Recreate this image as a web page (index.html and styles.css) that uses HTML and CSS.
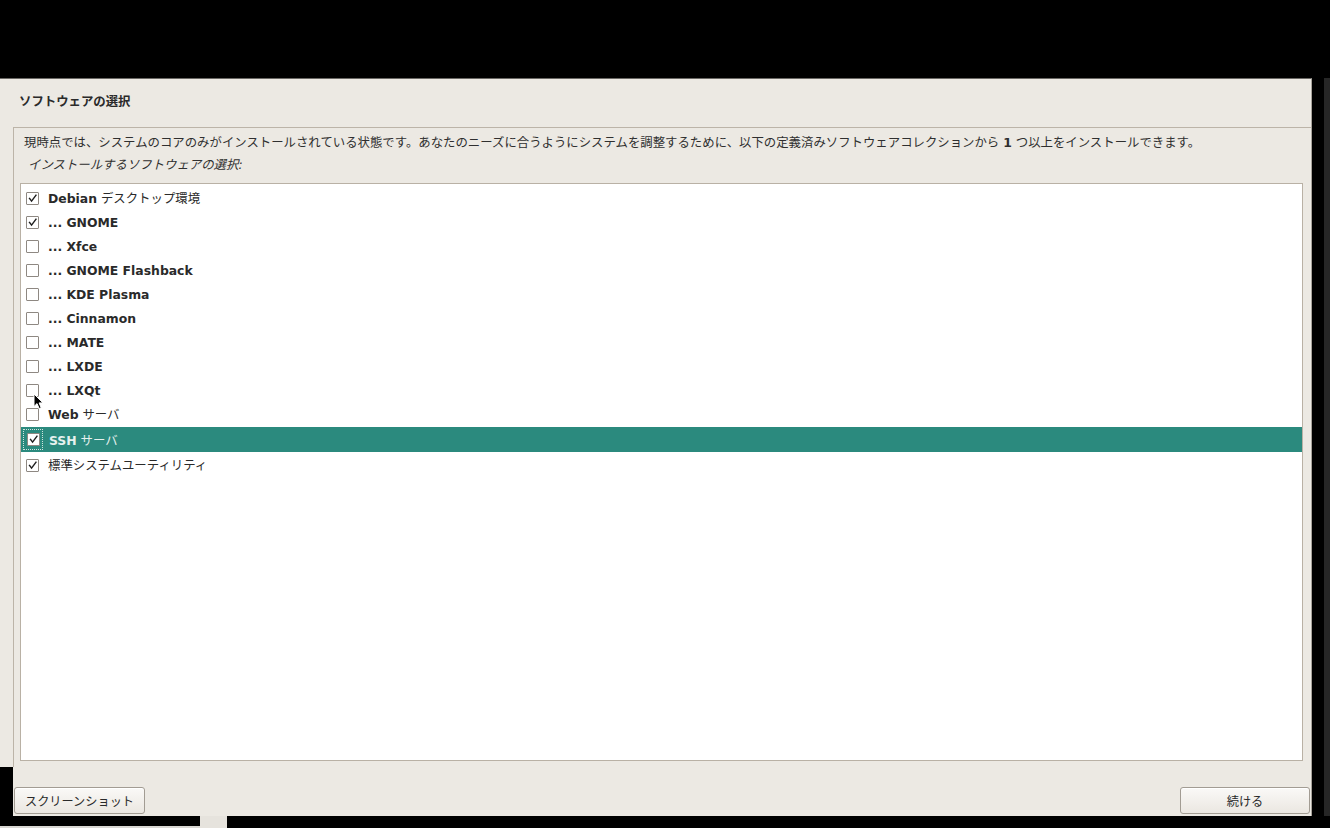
FILE: index.html
```html
<!DOCTYPE html>
<html lang="ja">
<head>
<meta charset="utf-8">
<title>ソフトウェアの選択</title>
<link rel="stylesheet" href="styles.css">
</head>
<body>
<div class="screen">
  <div class="top-black"></div>
  <div class="middle">
    <div class="window">
      <div class="header"><h1 class="title">ソフトウェアの選択</h1></div>
      <div class="frame">
        <p class="desc">現時点では、システムのコアのみがインストールされている状態です。あなたのニーズに合うようにシステムを調整するために、以下の定義済みソフトウェアコレクションから <b>1</b> つ以上をインストールできます。</p>
        <p class="prompt">インストールするソフトウェアの選択:</p>
        <ul class="list">
          <li class="row"><span class="focus"><span class="cb checked"><svg viewBox="0 0 13 13"><path d="M3 6.5 L5.4 9.6 L10.6 2.6"/></svg></span></span><span class="label"><b>Debian</b> デスクトップ環境</span></li>
          <li class="row"><span class="focus"><span class="cb checked"><svg viewBox="0 0 13 13"><path d="M3 6.5 L5.4 9.6 L10.6 2.6"/></svg></span></span><span class="label"><b>... GNOME</b></span></li>
          <li class="row"><span class="focus"><span class="cb"></span></span><span class="label"><b>... Xfce</b></span></li>
          <li class="row"><span class="focus"><span class="cb"></span></span><span class="label"><b>... GNOME Flashback</b></span></li>
          <li class="row"><span class="focus"><span class="cb"></span></span><span class="label"><b>... KDE Plasma</b></span></li>
          <li class="row"><span class="focus"><span class="cb"></span></span><span class="label"><b>... Cinnamon</b></span></li>
          <li class="row"><span class="focus"><span class="cb"></span></span><span class="label"><b>... MATE</b></span></li>
          <li class="row"><span class="focus"><span class="cb"></span></span><span class="label"><b>... LXDE</b></span></li>
          <li class="row"><span class="focus"><span class="cb"></span></span><span class="label"><b>... LXQt</b></span><svg class="cursor" viewBox="0 0 11 17"><path d="M1 1 L1 13.5 L4 10.6 L6.2 15.6 L8.2 14.7 L6.1 9.9 L10 9.9 Z"/></svg></li>
          <li class="row"><span class="focus"><span class="cb"></span></span><span class="label"><b>Web</b> サーバ</span></li>
          <li class="row selected"><span class="focus"><span class="cb checked"><svg viewBox="0 0 13 13"><path d="M3 6.5 L5.4 9.6 L10.6 2.6"/></svg></span></span><span class="label"><b>SSH</b> サーバ</span></li>
          <li class="row"><span class="focus"><span class="cb checked"><svg viewBox="0 0 13 13"><path d="M3 6.5 L5.4 9.6 L10.6 2.6"/></svg></span></span><span class="label">標準システムユーティリティ</span></li>
        </ul>
      </div>
      <div class="footer">
        <div class="gutter"></div>
        <button class="btn btn-left">スクリーンショット</button>
        <div class="spacer"></div>
        <button class="btn btn-right">続ける</button>
      </div>
    </div>
    <div class="edge-black"></div>
    <div class="edge-gray"></div>
  </div>
  <div class="bottom">
    <div class="b1"></div>
    <div class="b2"></div>
    <div class="b3"></div>
  </div>
</div>
</body>
</html>
```

FILE: styles.css
```css
html, body {
  margin: 0;
  padding: 0;
  background: #000;
}
.screen {
  width: 1330px;
  height: 828px;
  display: flex;
  flex-direction: column;
  background: #000;
  overflow: hidden;
  font-family: "DejaVu Sans", "Noto Sans CJK JP", sans-serif;
  font-size: 12.4px;
  color: #2f2f2f;
}
.top-black {
  height: 78px;
  flex: none;
}
.middle {
  display: flex;
  height: 738px;
  flex: none;
}
.window {
  width: 1311px;
  flex: none;
  background: #ece9e3;
  border-top: 1px solid #6a6864;
  border-right: 1px solid #a8a39b;
  display: flex;
  flex-direction: column;
}
.edge-black {
  width: 12px;
  flex: none;
}
.edge-gray {
  flex: 1;
  background: #262626;
}
.header {
  height: 48px;
  flex: none;
  display: flex;
  align-items: center;
  padding-left: 19px;
  padding-bottom: 4px;
  box-sizing: border-box;
}
.title {
  margin: 0;
  font-size: 12.4px;
  font-weight: bold;
  color: #2a2a2a;
}
.frame {
  height: 640px;
  flex: none;
  margin-left: 13px;
  border-top: 1px solid #bcb4a8;
  border-left: 1px solid #bcb4a8;
  box-sizing: border-box;
  padding: 6px 8px 6px 6px;
  display: flex;
  flex-direction: column;
}
.desc {
  margin: 0 0 0 4px;
  line-height: 17px;
  white-space: nowrap;
}
.prompt {
  margin: 5px 0 0 8px;
  line-height: 17px;
  font-style: italic;
}
.list {
  list-style: none;
  margin: 10px 0 0 0;
  padding: 2px 0 0 0;
  flex: 1;
  background: #fff;
  border: 1px solid #b9b1a5;
}
.row {
  position: relative;
  height: 24px;
  display: flex;
  align-items: center;
  padding-left: 2px;
  color: #2a2a2a;
}
.row.selected {
  margin-top: 1px;
  height: 25px;
  background: #2b8a7e;
  color: #e6f1ee;
}
.row + .row.selected + .row {
  height: 26px;
}
.focus {
  width: 19px;
  height: 19px;
  box-sizing: border-box;
  border: 1px dotted transparent;
  display: flex;
  align-items: center;
  justify-content: center;
  margin-right: 6px;
}
.selected .focus {
  border-color: #cfe3de;
  height: 21px;
  width: 20px;
}
.cb {
  width: 13px;
  height: 13px;
  box-sizing: border-box;
  border: 1px solid #8e8882;
  border-radius: 1px;
  background: #fff;
  display: block;
}
.cb svg {
  width: 11px;
  height: 11px;
  display: block;
}
.cb svg path {
  fill: none;
  stroke: #1e1e1e;
  stroke-width: 1.7;
  stroke-linecap: square;
  stroke-linejoin: miter;
}
.label {
  white-space: nowrap;
}
.label b {
  font-weight: bold;
}
.cursor {
  position: absolute;
  left: 12px;
  top: 15px;
  width: 11px;
  height: 17px;
}
.cursor path {
  fill: #000;
  stroke: #fff;
  stroke-width: 1;
  stroke-linejoin: round;
}
.footer {
  flex: 1;
  display: flex;
  align-items: flex-end;
  padding-bottom: 2px;
  position: relative;
}
.gutter {
  position: absolute;
  left: 0;
  top: 0;
  bottom: 0;
  width: 13px;
  background: #000;
}
.btn {
  height: 27px;
  font-family: "DejaVu Sans", "Noto Sans CJK JP", sans-serif;
  font-size: 12.2px;
  color: #2a2a2a;
  border: 1px solid #a29c93;
  border-radius: 3px;
  background: linear-gradient(#faf9f7, #ebe7e1);
  padding: 0;
  box-shadow: inset 0 1px 0 #fff;
}
.btn-left {
  margin-left: 14px;
  width: 131px;
}
.btn-right {
  width: 130px;
  margin-right: 1px;
}
.spacer {
  flex: 1;
}
.bottom {
  flex: 1;
  display: flex;
}
.b1 {
  width: 200px;
  background: #000;
  border-bottom: 2px solid #d8d6d2;
}
.b2 {
  width: 27px;
  background: #e6e3dd;
}
.b3 {
  flex: 1;
  background: #000;
}
```
